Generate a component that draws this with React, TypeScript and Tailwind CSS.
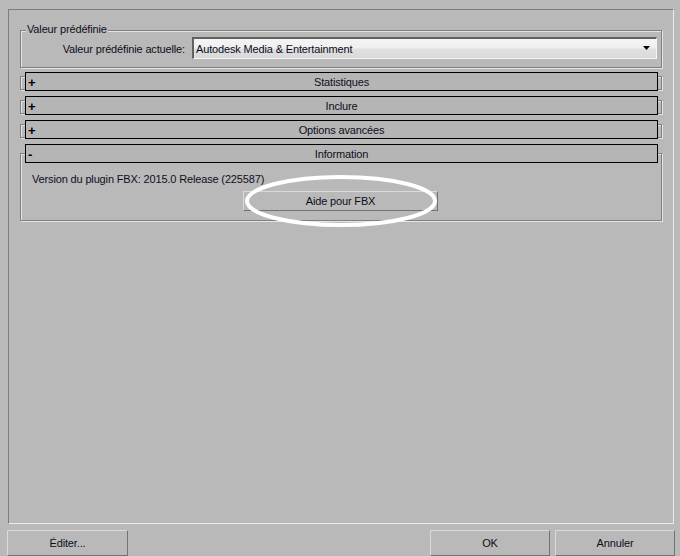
import React from "react";

const etched =
  "border border-[#808080] shadow-[inset_1px_1px_0_#e4e4e4,1px_1px_0_#e4e4e4]";

function RolloutBar({ sign, label }: { sign: string; label: string }) {
  return (
    <div className="relative ml-[5px] w-[633px] h-[19px] border border-black bg-[#b5b5b5] flex items-center pt-[1px]">
      <span className="w-[12px] pl-[2px] font-bold text-[13px] leading-[13px] text-black">{sign}</span>
      <span className="flex-1 text-center leading-[13px]">{label}</span>
      <span className="w-[12px]" />
    </div>
  );
}

function Collapsed({ label }: { label: string }) {
  return (
    <div className="relative w-[642px] h-[19px] mt-[5px] first:mt-0">
      <div className={`absolute left-0 right-0 top-[4px] bottom-[1px] ${etched}`} />
      <RolloutBar sign="+" label={label} />
    </div>
  );
}

function Btn({ label, className }: { label: string; className: string }) {
  return (
    <div
      className={`flex items-center justify-center border-t border-l border-[#dadada] border-r border-b border-r-[#727272] border-b-[#727272] bg-[#b9b9b9] leading-[13px] ${className}`}
    >
      {label}
    </div>
  );
}

export default function App() {
  return (
    <div className="w-[680px] h-[556px] bg-[#b9b9b9] pt-[9px] flex flex-col overflow-hidden font-['Liberation_Sans',Arial,sans-serif] text-[11px] tracking-[-0.15px] text-[#0e0e1c]">
      {/* main panel */}
      <div className="ml-[8px] w-[666px] h-[515px] border-t border-l border-[#7c7c7c] border-r border-b border-r-[#ebebeb] border-b-[#ebebeb] pt-[20px] pl-[11px]">
        {/* group box */}
        <div className={`relative w-[642px] h-[38px] ${etched}`}>
          <span className="absolute left-[5px] top-[-8px] px-[1px] bg-[#b9b9b9] leading-[13px]">
            Valeur prédéfinie
          </span>
          <div className="flex items-start pt-[6px]">
            <div className="w-[171px] pr-[7px] text-right leading-[22px] pt-[1px]">
              Valeur prédéfinie actuelle:
            </div>
            <div className="relative w-[465px] h-[22px] border-t-2 border-l-2 border-[#626262] border-r border-b border-r-[#f6f6f6] border-b-[#f6f6f6] bg-[linear-gradient(#f4f4f4_0%,#efefef_48%,#e0e0e0_52%,#d9d9d9_100%)] flex items-center pl-[2px] pt-[1px]">
              <span className="leading-[13px] text-[#0c0c24]">Autodesk Media &amp; Entertainment</span>
              <svg
                className="absolute right-[5px] top-[7px]"
                width="8"
                height="5"
                viewBox="0 0 8 5"
              >
                <path d="M0 0H7L3.5 4Z" fill="#000" />
              </svg>
            </div>
          </div>
        </div>

        {/* rollouts */}
        <div className="mt-[4px] flex flex-col">
          <Collapsed label="Statistiques" />
          <Collapsed label="Inclure" />
          <Collapsed label="Options avancées" />
          <div className="relative w-[642px] mt-[5px] pb-[10px]">
            <div className={`absolute left-0 right-0 top-[9px] bottom-0 ${etched}`} />
            <RolloutBar sign="-" label="Information" />
            <div className="relative pl-[12px] mt-[10px] leading-[13px]">
              Version du plugin FBX: 2015.0 Release (225587)
            </div>
            <Btn label="Aide pour FBX" className="relative ml-[223px] mt-[5px] w-[195px] h-[20px]" />
            <svg
              className="absolute left-0 top-0 overflow-visible pointer-events-none"
              width="642"
              height="90"
            >
              <ellipse cx="321" cy="57" rx="94" ry="24" fill="none" stroke="#ffffff" strokeWidth="4" />
            </svg>
          </div>
        </div>
      </div>

      {/* bottom buttons */}
      <div className="mt-[6px] flex">
        <Btn label="Éditer..." className="ml-[7px] w-[121px] h-[26px]" />
        <Btn label="OK" className="ml-[302px] w-[120px] h-[26px]" />
        <Btn label="Annuler" className="ml-[5px] w-[120px] h-[26px]" />
      </div>
    </div>
  );
}
